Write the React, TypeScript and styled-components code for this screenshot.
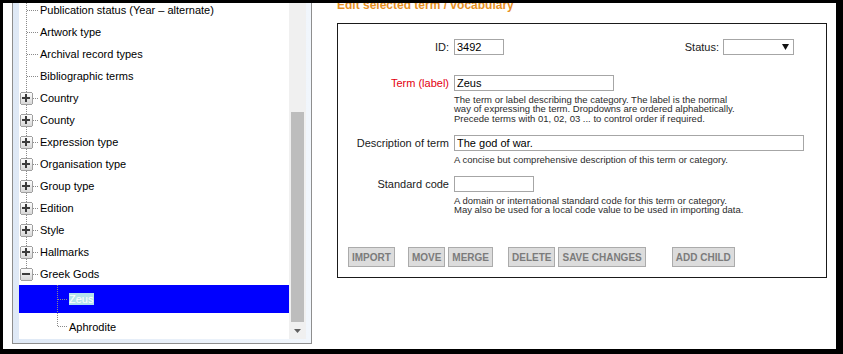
import React, { useId } from "react";
import styled, { createGlobalStyle } from "styled-components";

const GlobalStyle = createGlobalStyle`
  html, body {
    margin: 0;
    padding: 0;
    background: #000;
  }
  body {
    font-family: "Liberation Sans", Arial, sans-serif;
  }
`;

const Page = styled.div`
  display: flex;
  width: 833px;
  height: 346px;
  margin: 3px 7px 5px 3px;
  background: #fff;
  overflow: hidden;
`;

// ---- left: tree list ----

const LeftColumn = styled.div`
  width: 309px;
  flex: none;
  box-sizing: border-box;
  padding: 0 0 5px 9px;
  display: flex;
`;

const TreeBox = styled.div`
  flex: 1;
  display: flex;
  box-sizing: border-box;
  border: 1px solid #8e8e8e;
  border-top: none;
  padding: 0 5px 4px 6px;
  background: linear-gradient(90deg, #dfe9f6 0%, #f1f6fc 100%);
`;

const TreeList = styled.div`
  flex: 1;
  background: #fff;
  overflow: hidden;
`;

const TreeInner = styled.div`
  margin-top: -4px;
`;

const TreeRow = styled.div<{ $h: number; $selected?: boolean }>`
  display: flex;
  align-items: center;
  height: ${({ $h }) => $h}px;
  background: ${({ $selected }) => ($selected ? "#0000ff" : "transparent")};
  font-size: 11px;
  color: #000;
  white-space: nowrap;

  svg {
    flex: none;
  }
`;

const TreeLabel = styled.span<{ $selected?: boolean }>`
  line-height: 12px;
  padding: 0 1px 0 0;
  ${({ $selected }) =>
    $selected &&
    `
    background: #b4e2ec;
    color: #fff;
  `}
`;

const ScrollTrack = styled.div`
  width: 17px;
  flex: none;
  background: #f0f0f0;
  display: flex;
  flex-direction: column;
  justify-content: flex-end;
  align-items: center;
`;

const ScrollThumb = styled.div`
  width: 13px;
  height: 210px;
  background: #bdbdbd;
`;

const ScrollButton = styled.div`
  width: 17px;
  height: 17px;
  display: flex;
  align-items: center;
  justify-content: center;
`;

const DOT = "#8a8a8a";

function TopGutter({ h, box, open, last }: { h: number; box?: boolean; open?: boolean; last?: boolean }) {
  const id = useId();
  const mid = Math.floor(h / 2) + 0.5;
  return (
    <svg width={21} height={h} shapeRendering="crispEdges">
      <defs>
        <linearGradient id={id} x1="0" y1="0" x2="0" y2="1">
          <stop offset="0" stopColor="#ffffff" />
          <stop offset="1" stopColor="#d6d6d6" />
        </linearGradient>
      </defs>
      <line x1={7.5} y1={0} x2={7.5} y2={last ? mid : h} stroke={DOT} strokeDasharray="1 1" />
      <line x1={box ? 14 : 8} y1={mid} x2={19} y2={mid} stroke={DOT} strokeDasharray="1 1" />
      {box && (
        <g>
          <rect x={1.5} y={mid - 6} width={12} height={12} rx={2} fill={`url(#${id})`} stroke="#a0a0a0" />
          <rect x={3} y={mid - 1.5} width={8} height={2} fill="#3c3c3c" />
          {!open && <rect x={6} y={mid - 4.5} width={2} height={8} fill="#3c3c3c" />}
        </g>
      )}
    </svg>
  );
}

function ChildGutter({ h, last }: { h: number; last?: boolean }) {
  const mid = Math.floor(h / 2) + 0.5;
  return (
    <svg width={50} height={h} shapeRendering="crispEdges">
      <line x1={38.5} y1={0} x2={38.5} y2={last ? mid : h} stroke={DOT} strokeDasharray="1 1" />
      <line x1={39} y1={mid} x2={48} y2={mid} stroke={DOT} strokeDasharray="1 1" />
    </svg>
  );
}

const topItems = [
  { label: "Publication status (Year \u2013 alternate)" },
  { label: "Artwork type" },
  { label: "Archival record types" },
  { label: "Bibliographic terms" },
  { label: "Country", box: true },
  { label: "County", box: true },
  { label: "Expression type", box: true },
  { label: "Organisation type", box: true },
  { label: "Group type", box: true },
  { label: "Edition", box: true },
  { label: "Style", box: true },
  { label: "Hallmarks", box: true },
  { label: "Greek Gods", box: true, open: true, last: true },
];

const childItems = [
  { label: "Zeus", selected: true, h: 28 },
  { label: "Aphrodite", last: true, h: 27 },
];

// ---- right: edit form ----

const RightPanel = styled.div`
  flex: 1;
  display: flex;
  flex-direction: column;
  padding: 0 9px 0 25px;
`;

const Heading = styled.h2`
  margin: -5px 0 11px 0;
  font-size: 12px;
  line-height: 14px;
  font-weight: bold;
  color: #e8901f;
`;

const FormBox = styled.div`
  border: 1px solid #1a1a1a;
  padding: 15px 22px 10px 0;
  display: flex;
  flex-direction: column;
`;

const FieldRow = styled.div<{ $top?: number }>`
  display: flex;
  align-items: flex-start;
  margin-top: ${({ $top }) => $top ?? 0}px;
`;

const Label = styled.div<{ $required?: boolean }>`
  width: 111px;
  flex: none;
  margin-right: 5px;
  text-align: right;
  font-size: 11px;
  line-height: 16px;
  color: ${({ $required }) => ($required ? "#e3000f" : "#1a1a1a")};
`;

const FieldBody = styled.div`
  flex: 1;
  display: flex;
  flex-direction: column;
  align-items: flex-start;
`;

const InlineFields = styled.div`
  display: flex;
  align-items: center;
  width: 100%;
`;

const TextInput = styled.input<{ $w: string }>`
  box-sizing: border-box;
  width: ${({ $w }) => $w};
  height: 16px;
  margin: 0;
  padding: 0 2px;
  border: 1px solid #a6a6a6;
  border-radius: 0;
  font-family: "Liberation Sans", Arial, sans-serif;
  font-size: 11px;
  color: #000;
  background: #fff;
  outline: none;
`;

const Help = styled.div`
  margin-top: 3.5px;
  font-size: 9.5px;
  line-height: 9.5px;
  color: #2b2b2b;
  white-space: nowrap;
`;

const StatusGroup = styled.div`
  margin-left: auto;
  margin-right: 10px;
  display: flex;
  align-items: center;
  gap: 4px;
  font-size: 11px;
  color: #1a1a1a;
`;

const FakeSelect = styled.div`
  box-sizing: border-box;
  width: 71px;
  height: 16px;
  border: 1px solid #a6a6a6;
  display: flex;
  align-items: center;
  justify-content: flex-end;
  padding-right: 4px;
`;

const ButtonBar = styled.div`
  display: flex;
  margin-top: 32.5px;
  padding-left: 10px;
`;

const ActionButton = styled.button<{ $gap?: number }>`
  height: 20px;
  margin: 0 0 0 ${({ $gap }) => $gap ?? 0}px;
  padding: 0 3px;
  border: 1px solid #ababab;
  border-radius: 0;
  background: #dcdcdc;
  color: #7b7b7b;
  font-family: "Liberation Sans", Arial, sans-serif;
  font-size: 10px;
  font-weight: bold;
  white-space: nowrap;
`;

const buttons = [
  { label: "IMPORT", gap: 0 },
  { label: "MOVE", gap: 13 },
  { label: "MERGE", gap: 3 },
  { label: "DELETE", gap: 15 },
  { label: "SAVE CHANGES", gap: 3 },
  { label: "ADD CHILD", gap: 26 },
];

export default function App() {
  return (
    <>
      <GlobalStyle />
      <Page>
        <LeftColumn>
          <TreeBox>
            <TreeList>
              <TreeInner>
                {topItems.map((item) => (
                  <TreeRow key={item.label} $h={22}>
                    <TopGutter h={22} box={item.box} open={item.open} last={item.last} />
                    <TreeLabel>{item.label}</TreeLabel>
                  </TreeRow>
                ))}
                {childItems.map((item) => (
                  <TreeRow key={item.label} $h={item.h} $selected={item.selected}>
                    <ChildGutter h={item.h} last={item.last} />
                    <TreeLabel $selected={item.selected}>{item.label}</TreeLabel>
                  </TreeRow>
                ))}
              </TreeInner>
            </TreeList>
            <ScrollTrack>
              <ScrollThumb />
              <ScrollButton>
                <svg width="7" height="4" viewBox="0 0 7 4">
                  <path d="M0 0h7L3.5 4z" fill="#606060" />
                </svg>
              </ScrollButton>
            </ScrollTrack>
          </TreeBox>
        </LeftColumn>

        <RightPanel>
          <Heading>Edit selected term / vocabulary</Heading>
          <FormBox>
            <FieldRow>
              <Label>ID:</Label>
              <FieldBody>
                <InlineFields>
                  <TextInput $w="50px" readOnly defaultValue="3492" />
                  <StatusGroup>
                    Status:
                    <FakeSelect>
                      <svg width="7" height="6" viewBox="0 0 7 6">
                        <path d="M0 0h7L3.5 6z" fill="#111" />
                      </svg>
                    </FakeSelect>
                  </StatusGroup>
                </InlineFields>
              </FieldBody>
            </FieldRow>

            <FieldRow $top={20}>
              <Label $required>Term (label)</Label>
              <FieldBody>
                <TextInput $w="160px" readOnly defaultValue="Zeus" />
                <Help>
                  The term or label describing the category. The label is the normal
                  <br />
                  way of expressing the term. Dropdowns are ordered alphabetically.
                  <br />
                  Precede terms with 01, 02, 03 ... to control order if required.
                </Help>
              </FieldBody>
            </FieldRow>

            <FieldRow $top={12}>
              <Label>Description of term</Label>
              <FieldBody>
                <TextInput $w="100%" readOnly defaultValue="The god of war." />
                <Help>A concise but comprehensive description of this term or category.</Help>
              </FieldBody>
            </FieldRow>

            <FieldRow $top={12}>
              <Label>Standard code</Label>
              <FieldBody>
                <TextInput $w="80px" readOnly defaultValue="" />
                <Help>
                  A domain or international standard code for this term or category.
                  <br />
                  May also be used for a local code value to be used in importing data.
                </Help>
              </FieldBody>
            </FieldRow>

            <ButtonBar>
              {buttons.map((b) => (
                <ActionButton key={b.label} $gap={b.gap}>
                  {b.label}
                </ActionButton>
              ))}
            </ButtonBar>
          </FormBox>
        </RightPanel>
      </Page>
    </>
  );
}
